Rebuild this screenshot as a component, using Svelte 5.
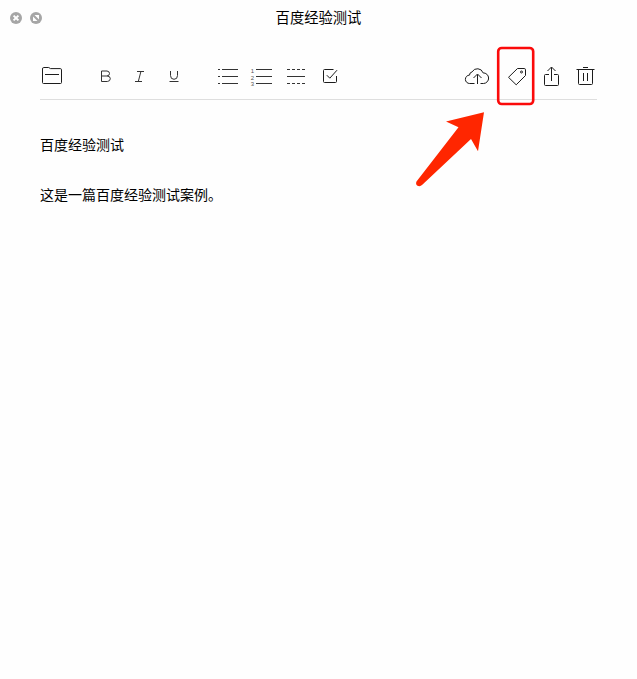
<script>
  // Each tool is drawn in window coordinates; x and w give its slice of the toolbar.
  const tools = [
    { name: 'Folder', x: 40, w: 24, gap: 0, dark: true, paths: ['M42.5 69V82.5Q42.5 83.5 43.5 83.5H60.5Q61.5 83.5 61.5 82.5V69.8Q61.5 68.6 60.3 68.6H50.5L48.7 67.5H43.7Q42.5 67.5 42.5 69Z', 'M45 74.5H59'] },
    { name: 'Bold', x: 98, w: 16, gap: 34, paths: ['M101.5 71V81.5H107.3Q110.3 81.2 110.3 78.7T107.3 76H101.5M107 76Q109.5 75.7 109.5 73.5T107 71H101.5'] },
    { name: 'Italic', x: 132, w: 16, gap: 18, paths: ['M137 71.5H144M135 81.5H142M140.9 71.5L138.3 81.5'] },
    { name: 'Underline', x: 166, w: 16, gap: 18, paths: ['M170.5 71V75.5Q170.5 79.3 174 79.3T177.5 75.5V71M169.5 81.5H178.5'] },
    { name: 'List', x: 216, w: 24, gap: 34, paths: ['M218 69.5H220M222 69.5H238M218 76.5H220M222 76.5H238M218 83.5H220M222 83.5H238'] },
    { name: 'Numbered', x: 250, w: 24, gap: 10, numbered: true, paths: ['M256 69.5H272M256 76.5H272M256 83.5H272'] },
    { name: 'Divider', x: 284, w: 24, gap: 10, paths: ['M287 69.5H290M292 69.5H295M297 69.5H300M302 69.5H305M287 76.5H305M287 83.5H290M292 83.5H295M297 83.5H300M302 83.5H305'] },
    { name: 'Checkbox', x: 320, w: 20, gap: 12, dark: true, paths: ['M333.5 69.5H324.5Q323.5 69.5 323.5 70.5V81.5Q323.5 82.5 324.5 82.5H335.5Q336.5 82.5 336.5 81.5V76', 'M326.8 75.2L329.8 78.2L337 70.2'] },
    { name: 'Upload', x: 464, w: 26, gap: 124, dark: true, paths: ['M474.5 83.5H469.7A4.2 4.2 0 0 1 469.5 75.1A3.3 3.3 0 0 1 472.1 71.9A6 6 0 0 1 483.1 72.9A5.3 5.3 0 0 1 483.5 83.5H480.5', 'M477.5 84V74.5M473.5 78L477.5 74L481.5 78'] },
    { name: 'Tag', x: 505, w: 24, gap: 15, tag: true, dark: true, paths: ['M517.5 68.5H524.2Q525.5 68.5 525.5 69.8V75.5L516.2 84.8L508.5 77.3Z'] },
    { name: 'Share', x: 541, w: 20, gap: 12, dark: true, paths: ['M549 74.5H545.5Q544.5 74.5 544.5 75.5V84.5Q544.5 85.5 545.5 85.5H557.5Q558.5 85.5 558.5 84.5V75.5Q558.5 74.5 557.5 74.5H554', 'M551.5 81V67.3M547.5 71L551.5 67L555.5 71'] },
    { name: 'Delete', x: 575, w: 22, gap: 14, dark: true, paths: ['M576.5 69.5H594.5M583 67.5H588M578.5 69.5V83.5Q578.5 84.5 579.5 84.5H591.5Q592.5 84.5 592.5 83.5V69.5M583.5 73V81M587.5 73V81'] }
  ];
</script>

<div class="window">
  <header>
    <div class="controls">
      <svg width="12" height="12" viewBox="0 0 12 12">
        <circle cx="6" cy="6" r="6" fill="#a6a6a6" />
        <path d="M3.6 3.6L8.4 8.4M8.4 3.6L3.6 8.4" stroke="#fff" stroke-width="2" />
      </svg>
      <svg width="12" height="12" viewBox="0 0 12 12">
        <circle cx="6" cy="6" r="6" fill="#a6a6a6" />
        <path d="M4.5 3H9V7.5ZM3 4.5V9H7.5Z" fill="#fff" />
      </svg>
    </div>
    <h1>百度经验测试</h1>
  </header>

  <nav>
    {#each tools as t}
      <button aria-label={t.name} style="width:{t.w}px;margin-left:{t.gap}px">
        <svg class="icon" class:dark={t.dark} width={t.w} height="43" viewBox="{t.x} 56 {t.w} 43">
          {#each t.paths as d}<path {d} />{/each}
          {#if t.numbered}
            <text x="250.8" y="73">1</text>
            <text x="250.8" y="79.5">2</text>
            <text x="250.8" y="86">3</text>
          {/if}
          {#if t.tag}<circle cx="521.5" cy="72" r="1" />{/if}
        </svg>
      </button>
    {/each}
  </nav>

  <main>
    <p>百度经验测试</p>
    <p>这是一篇百度经验测试案例。</p>
  </main>

  <svg class="callout" width="637" height="200" viewBox="0 0 637 200">
    <rect x="498.2" y="48" width="35" height="56" rx="3.5" fill="none" stroke="#fb0a0a" stroke-width="2.6" />
    <path d="M484 112.3L446 121.5L458.5 127.3L416.5 181.5Q415.3 184.3 417.5 185.7Q420 187 422.3 184.8L471 139L478 151.3Z" fill="#ff2600" />
  </svg>
</div>

<style>
  :global(body) { background: #fefefe; }
  .window {
    position: relative;
    height: 679px;
    overflow: hidden;
    background: #fefefe;
    color: #000;
    font-family: "Liberation Sans", "Noto Sans CJK SC", sans-serif;
  }
  header { display: grid; grid-template-columns: 1fr auto 1fr; align-items: center; height: 36px; }
  .controls { display: flex; gap: 8px; padding-left: 10px; }
  h1 { margin: 0; font-size: 14.3px; line-height: 20px; font-weight: 400; }
  nav { display: flex; height: 43px; margin: 20px 40px 0; border-bottom: 1px solid #dedede; }
  button { flex: none; padding: 0; border: 0; background: none; }
  svg { display: block; }
  .icon { fill: none; stroke: #333; stroke-width: 1; stroke-linejoin: round; }
  .icon.dark { stroke: #1c1c1c; }
  .icon text { font: 6px "Liberation Sans", sans-serif; fill: #555; stroke: none; }
  main { padding: 35px 40px; font-size: 14px; line-height: 20px; }
  p { margin: 0 0 30px; }
  .callout { position: absolute; top: 0; left: 0; pointer-events: none; }
</style>
